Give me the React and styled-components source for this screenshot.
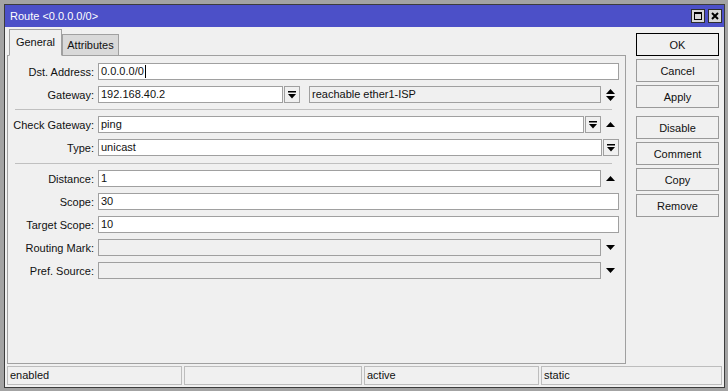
import styled, { createGlobalStyle } from "styled-components";

const GlobalStyle = createGlobalStyle`
  html, body {
    margin: 0;
    padding: 0;
  }
  body {
    background: #a3a3a3;
    font-family: "Liberation Sans", Arial, sans-serif;
    font-size: 11px;
    color: #111;
  }
  * {
    box-sizing: border-box;
  }
`;

const Desktop = styled.div`
  width: 728px;
  height: 391px;
  padding: 4px 3px 3px 4px;
  background: #a3a3a3;
`;

const Window = styled.div`
  height: 100%;
  display: flex;
  flex-direction: column;
  border: 1px solid #3c3c3c;
  background: #f0f0f0;
`;

const TitleBar = styled.div`
  height: 22px;
  flex-shrink: 0;
  display: flex;
  align-items: center;
  padding: 0 2px 0 5px;
  background: #4c50c8;
  color: #fff;
`;

const TitleButtons = styled.div`
  margin-left: auto;
  display: flex;
  gap: 3px;
`;

const TitleButton = styled.div`
  width: 14px;
  height: 14px;
  display: flex;
  align-items: center;
  justify-content: center;
  border: 1px solid #2e2e2e;
  background: #d8d8d8;
`;

const Main = styled.div`
  flex: 1;
  min-height: 0;
  display: flex;
  gap: 10px;
  padding: 2px 5px 0 2px;
`;

const LeftColumn = styled.div`
  width: 619px;
  display: flex;
  flex-direction: column;
`;

const TabBar = styled.div`
  display: flex;
  align-items: flex-end;
  padding-left: 2px;
  margin-bottom: -1px;
  position: relative;
  z-index: 1;
`;

const Tab = styled.div`
  display: flex;
  align-items: center;
  justify-content: center;
  border: 1px solid #a0a0a0;
  border-bottom: ${(p) => (p.$active ? "1px solid #f0f0f0" : "none")};
  background: ${(p) => (p.$active ? "#f0f0f0" : "#d9d9d9")};
  width: ${(p) => p.$width}px;
  height: ${(p) => (p.$active ? 27 : 21)}px;
  margin-bottom: ${(p) => (p.$active ? 0 : 1)}px;
  padding-bottom: ${(p) => (p.$active ? 2 : 0)}px;
`;

const Panel = styled.div`
  flex: 1;
  display: flex;
  flex-direction: column;
  gap: 6px;
  padding: 7px 6px 0 0;
  border: 1px solid #a0a0a0;
`;

const Row = styled.div`
  height: 17px;
  display: flex;
  align-items: center;
`;

const Label = styled.div`
  width: 86px;
  flex-shrink: 0;
  margin-right: 4px;
  text-align: right;
  white-space: nowrap;
`;

const Field = styled.div`
  height: 17px;
  flex: ${(p) => (p.$width ? "none" : 1)};
  width: ${(p) => (p.$width ? `${p.$width}px` : "auto")};
  margin-left: ${(p) => p.$gap || 0}px;
  padding: 0 2px;
  border: 1px solid #a0a0a0;
  background: ${(p) => (p.$disabled ? "#f0f0f0" : "#fff")};
  line-height: 15px;
  white-space: nowrap;
  overflow: hidden;
`;

const Caret = styled.span`
  display: inline-block;
  width: 1px;
  height: 13px;
  margin-left: 1px;
  vertical-align: -3px;
  background: #000;
`;

const DropButton = styled.div`
  width: 16px;
  height: 17px;
  flex-shrink: 0;
  margin-left: 1px;
  display: flex;
  align-items: center;
  justify-content: center;
  border: 1px solid #a0a0a0;
  background: #f0f0f0;
`;

const ArrowSlot = styled.div`
  width: 18px;
  flex-shrink: 0;
  display: flex;
  justify-content: center;
  padding-left: 1px;
`;

const Separator = styled.div`
  height: 1px;
  margin: ${(p) => (p.$loose ? 1 : 0)}px 7px 0 7px;
  background: #c0c0c0;
`;

const ButtonStack = styled.div`
  width: 83px;
  display: flex;
  flex-direction: column;
  gap: 3px;
  padding-top: 4px;
`;

const ActionButton = styled.div`
  height: 23px;
  display: flex;
  align-items: center;
  justify-content: center;
  margin-top: ${(p) => (p.$spaced ? 5 : 0)}px;
  border: 1px solid ${(p) => (p.$default ? "#000" : "#9a9a9a")};
  background: #f0f0f0;
`;

const StatusBar = styled.div`
  display: grid;
  grid-template-columns: 175fr 178fr 175fr 181fr;
  gap: 2px;
  padding: 2px;
`;

const StatusCell = styled.div`
  height: 19px;
  padding-left: 2px;
  border: 1px solid #bdbdbd;
  line-height: 17px;
`;

const DropGlyph = () => (
  <svg width="8" height="8" viewBox="0 0 8 8">
    <rect x="0" y="0" width="8" height="1.5" fill="#000" />
    <polygon points="0,3 8,3 4,7.5" fill="#000" />
  </svg>
);

const UpArrow = () => (
  <svg width="9" height="5" viewBox="0 0 9 5">
    <polygon points="0,5 4.5,0 9,5" fill="#000" />
  </svg>
);

const DownArrow = () => (
  <svg width="9" height="5" viewBox="0 0 9 5">
    <polygon points="0,0 9,0 4.5,5" fill="#000" />
  </svg>
);

const UpDownArrow = () => (
  <svg width="9" height="12" viewBox="0 0 9 12">
    <polygon points="0,5 4.5,0 9,5" fill="#000" />
    <polygon points="0,7 9,7 4.5,12" fill="#000" />
  </svg>
);

const MaximizeGlyph = () => (
  <svg width="10" height="10" viewBox="0 0 10 10">
    <rect x="1.5" y="1.5" width="7" height="7" fill="none" stroke="#000" />
    <rect x="1" y="1" width="8" height="2" fill="#000" />
  </svg>
);

const CloseGlyph = () => (
  <svg width="10" height="10" viewBox="0 0 10 10">
    <path d="M2 2 L8 8 M8 2 L2 8" stroke="#000" strokeWidth="2" />
  </svg>
);

const App = () => {
  return (
    <>
      <GlobalStyle />
      <Desktop>
        <Window>
          <TitleBar>
            <span>Route &lt;0.0.0.0/0&gt;</span>
            <TitleButtons>
              <TitleButton>
                <MaximizeGlyph />
              </TitleButton>
              <TitleButton>
                <CloseGlyph />
              </TitleButton>
            </TitleButtons>
          </TitleBar>
          <Main>
            <LeftColumn>
              <TabBar>
                <Tab $active $width={53}>General</Tab>
                <Tab $width={57}>Attributes</Tab>
              </TabBar>
              <Panel>
                <Row>
                  <Label>Dst. Address:</Label>
                  <Field>
                    0.0.0.0/0
                    <Caret />
                  </Field>
                </Row>
                <Row>
                  <Label>Gateway:</Label>
                  <Field $width={185}>192.168.40.2</Field>
                  <DropButton>
                    <DropGlyph />
                  </DropButton>
                  <Field $disabled $gap={9}>
                    reachable ether1-ISP
                  </Field>
                  <ArrowSlot>
                    <UpDownArrow />
                  </ArrowSlot>
                </Row>
                <Separator />
                <Row>
                  <Label>Check Gateway:</Label>
                  <Field>ping</Field>
                  <DropButton>
                    <DropGlyph />
                  </DropButton>
                  <ArrowSlot>
                    <UpArrow />
                  </ArrowSlot>
                </Row>
                <Row>
                  <Label>Type:</Label>
                  <Field>unicast</Field>
                  <DropButton>
                    <DropGlyph />
                  </DropButton>
                </Row>
                <Separator $loose />
                <Row>
                  <Label>Distance:</Label>
                  <Field>1</Field>
                  <ArrowSlot>
                    <UpArrow />
                  </ArrowSlot>
                </Row>
                <Row>
                  <Label>Scope:</Label>
                  <Field>30</Field>
                </Row>
                <Row>
                  <Label>Target Scope:</Label>
                  <Field>10</Field>
                </Row>
                <Row>
                  <Label>Routing Mark:</Label>
                  <Field $disabled />
                  <ArrowSlot>
                    <DownArrow />
                  </ArrowSlot>
                </Row>
                <Row>
                  <Label>Pref. Source:</Label>
                  <Field $disabled />
                  <ArrowSlot>
                    <DownArrow />
                  </ArrowSlot>
                </Row>
              </Panel>
            </LeftColumn>
            <ButtonStack>
              <ActionButton $default>OK</ActionButton>
              <ActionButton>Cancel</ActionButton>
              <ActionButton>Apply</ActionButton>
              <ActionButton $spaced>Disable</ActionButton>
              <ActionButton>Comment</ActionButton>
              <ActionButton>Copy</ActionButton>
              <ActionButton>Remove</ActionButton>
            </ButtonStack>
          </Main>
          <StatusBar>
            <StatusCell>enabled</StatusCell>
            <StatusCell />
            <StatusCell>active</StatusCell>
            <StatusCell>static</StatusCell>
          </StatusBar>
        </Window>
      </Desktop>
    </>
  );
};

export default App;
